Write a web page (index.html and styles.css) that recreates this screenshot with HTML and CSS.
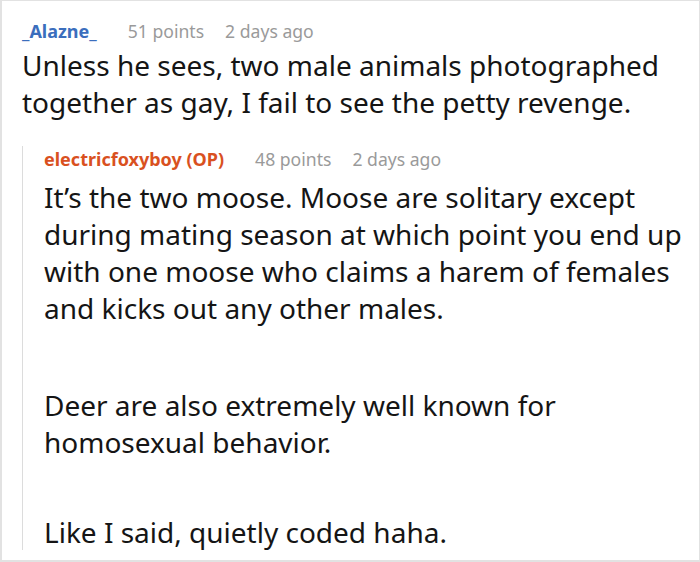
FILE: index.html
```html
<!DOCTYPE html>
<html>
<head>
<meta charset="utf-8">
<link rel="stylesheet" href="styles.css">
</head>
<body>
<div class="card">
  <div class="comment">
    <div class="meta">
      <span class="author">_Alazne_</span>
      <span class="info">51 points</span>
      <span class="info">2 days ago</span>
    </div>
    <p class="text">Unless he sees, two male animals photographed together as gay, I fail to see the petty revenge.</p>
  </div>
  <div class="reply">
    <div class="meta">
      <span class="author op">electricfoxyboy (OP)</span>
      <span class="info">48 points</span>
      <span class="info">2 days ago</span>
    </div>
    <p class="text para-wide">It’s the two moose. Moose are solitary except during mating season at which point you end up with one moose who claims a harem of females and kicks out any other males.</p>
    <p class="text para">Deer are also extremely well known for homosexual behavior.</p>
    <p class="text last">Like I said, quietly coded haha.</p>
  </div>
</div>
</body>
</html>
```
FILE: styles.css
```css
html, body {
  margin: 0;
  padding: 0;
  background: #fff;
}
body {
  font-family: "Noto Sans", sans-serif;
  width: 700px;
  height: 562px;
  overflow: hidden;
}
.card {
  box-sizing: border-box;
  width: 700px;
  height: 562px;
  border: 1px solid #e2e2e2;
  border-left-width: 2px;
  border-bottom-width: 2px;
  padding: 17px 0 0 20px;
  overflow: hidden;
}
.meta {
  display: flex;
  gap: 21px;
  font-size: 18px;
  line-height: 26px;
  margin-bottom: 3px;
}
.author {
  font-weight: 700;
  color: #3b6ebd;
  margin-right: 10px;
}
.author.op {
  color: #d9511f;
}
.info {
  color: #9a9a9a;
  font-size: 17.6px;
}
.text {
  margin: 0;
  font-size: 28px;
  line-height: 36.7px;
  color: #151515;
}
.para-wide {
  margin-bottom: 61px;
}
.para {
  margin-bottom: 53px;
}
.last {
  margin-bottom: -8px;
}
.reply {
  margin-top: 36px;
  border-left: 1px solid #dcdcdc;
  padding: 0 0 0 21px;
}
.reply .meta {
  margin-top: -10px;
  margin-bottom: 7px;
}
```
